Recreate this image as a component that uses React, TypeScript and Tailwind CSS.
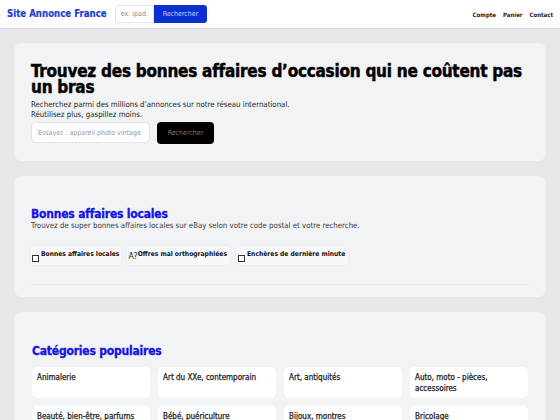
export default function App() {
  const categories = [
    "Animalerie",
    "Art du XXe, contemporain",
    "Art, antiquités",
    "Auto, moto - pièces, accessoires",
    "Beauté, bien-être, parfums",
    "Bébé, puériculture",
    "Bijoux, montres",
    "Bricolage",
  ];

  return (
    <div className="min-h-screen bg-[#e5e7eb] font-['DejaVu_Sans_Condensed','DejaVu_Sans',sans-serif] text-[#111]">
      <header className="flex h-[29px] items-center border-b border-[#d6d8dc] bg-white pl-[7px] pr-[7px]">
        <span className="text-[9.6px] font-bold text-[#1b3fd2] [-webkit-text-stroke:0.2px_#1b3fd2]">
          Site Annonce France
        </span>
        <div className="ml-[8px] flex h-[18px]">
          <input
            placeholder="ex: ipad."
            className="w-[39px] rounded-l-[3px] border border-[#e3e4e8] bg-white px-[5px] text-[7px] placeholder:text-[#888] outline-none"
          />
          <button className="rounded-r-[3px] bg-[#0b30cf] px-[9px] text-[7px] text-[#c8d0f5]">Rechercher</button>
        </div>
        <nav className="ml-auto flex gap-[7px] text-[6px] font-bold text-[#222]">
          <a>Compte</a>
          <a>Panier</a>
          <a>Contact</a>
        </nav>
      </header>

      <main className="flex flex-col gap-[15px] px-[14px] pt-[14px]">
        <section className="rounded-[8px] bg-[#f2f3f5] px-[17px] pt-[20px] pb-[17px]">
          <h1 className="text-[17px] leading-[16px] font-bold tracking-[-0.25px] text-black [-webkit-text-stroke:0.45px_black]">
            Trouvez des bonnes affaires d’occasion qui ne coûtent pas un bras
          </h1>
          <p className="mt-[5px] text-[7.8px] leading-[10px] text-[#222]">
            Recherchez parmi des millions d’annonces sur notre réseau international.
            <br />
            Réutilisez plus, gaspillez moins.
          </p>
          <div className="mt-[2px] flex gap-[7px]">
            <input
              placeholder="Essayez : appareil photo vintage"
              className="h-[21px] w-[119px] rounded-[5px] border border-[#e2e3e6] bg-white px-[6px] text-[7px] placeholder:text-[#999] outline-none"
            />
            <button className="h-[22px] w-[57px] rounded-[4px] bg-black text-[7px] text-[#777]">Rechercher</button>
          </div>
        </section>

        <section className="rounded-[8px] bg-[#f2f3f5] px-[17px] pt-[31px]">
          <h2 className="text-[12px] leading-[14px] font-bold tracking-[-0.2px] text-[#1414e4] [-webkit-text-stroke:0.3px_#1414e4]">
            Bonnes affaires locales
          </h2>
          <p className="text-[7.8px] leading-[10px] text-[#3a3a3a]">
            Trouvez de super bonnes affaires locales sur eBay selon votre code postal et votre recherche.
          </p>
          <div className="mt-[15px] flex gap-[6px] text-[6.7px] leading-[8px] font-bold">
            <div className="flex h-[19px] items-start gap-[2px] rounded-[4px] bg-[#f7f8fa] pt-[4px] pr-[2px] pl-[1px] shadow-[0_0_2px_rgba(0,0,0,0.08)]">
              <span className="mt-[5px] inline-block h-[7px] w-[7px] border border-[#333] bg-white" />
              <span>Bonnes affaires locales</span>
            </div>
            <div className="flex h-[19px] items-start rounded-[4px] bg-[#f7f8fa] pt-[4px] pr-[3px] pl-[1px] shadow-[0_0_2px_rgba(0,0,0,0.08)]">
              <span className="mt-[1px] text-[8.5px] leading-[10px] font-normal">A?</span>
              <span>Offres mal orthographiées</span>
            </div>
            <div className="flex h-[19px] items-start gap-[2px] rounded-[4px] bg-[#f7f8fa] pt-[4px] pr-[3px] pl-[2px] shadow-[0_0_2px_rgba(0,0,0,0.08)]">
              <span className="mt-[5px] inline-block h-[7px] w-[7px] border border-[#333] bg-white" />
              <span>Enchères de dernière minute</span>
            </div>
          </div>
          <div className="mt-[19px] h-[13px] border-t border-[#ebecee]" />
        </section>

        <section className="rounded-[8px] bg-[#f2f3f5] px-[18px] pt-[32px] pb-[20px]">
          <h2 className="text-[12px] leading-[14px] font-bold tracking-[-0.2px] text-[#1414e4] [-webkit-text-stroke:0.3px_#1414e4]">
            Catégories populaires
          </h2>
          <div className="mt-[9px] grid grid-cols-4 gap-[8px]">
            {categories.map((c) => (
              <div
                key={c}
                className="min-h-[30px] rounded-[5px] bg-white px-[5px] pt-[5px] pb-[4px] text-[8px] leading-[11px] text-[#222] [-webkit-text-stroke:0.25px_#222]"
              >
                {c}
              </div>
            ))}
          </div>
        </section>
      </main>
    </div>
  );
}
